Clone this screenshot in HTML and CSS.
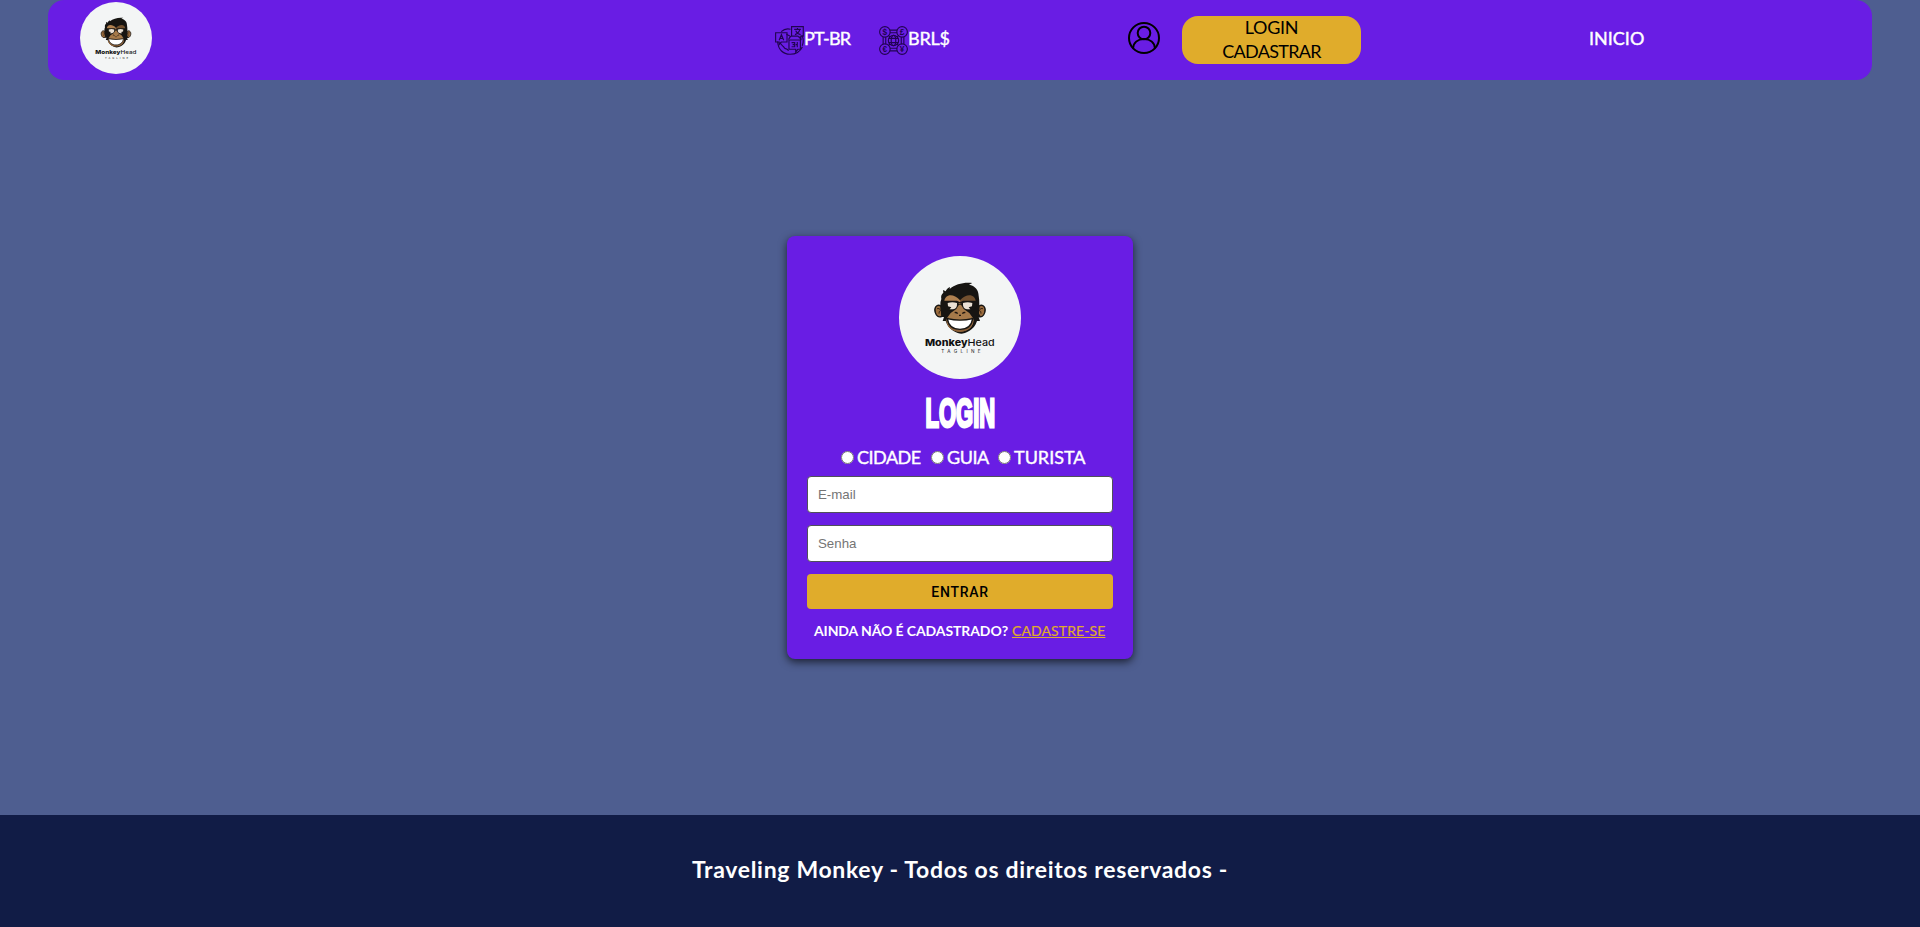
FILE: index.html
```html
<!DOCTYPE html>
<html lang="pt-BR">
<head>
<meta charset="utf-8">
<title>Traveling Monkey - Login</title>
<link rel="stylesheet" href="styles.css">
</head>
<body>
<svg class="defs" aria-hidden="true">
  <symbol id="monkey" viewBox="27 17 366 369" preserveAspectRatio="none">
    <ellipse cx="210" cy="201.500" rx="183" ry="184.500" fill="#f3f5f5"/>
    <path d="M153 167c-13-8-22 7-17 20 3 10 9 15 20 11zM267 167c13-8 22 7 17 20-3 10-9 15-20 11z" fill="#9b6c3e" stroke="#171512" stroke-width="4"/>
    <path d="M141 175q8-4 11 6-6 1-5 9M279 175q-8-4-11 6 6 1 5 9" fill="none" stroke="#3b2715" stroke-width="3"/>
    <path d="M154 188c-3-16-5-30 0-42-2-9 1-15 6-19l-1-8 8 4c2-6 7-10 13-13l-1 6c17-15 43-21 68-18l-10 5c18 3 29 16 29 33 3 17 2 34 0 52l7 12-7 0 4 12-9 0c-8 28-36 38-47 38s-39-10-47-38l-9 0 4-12-7 0z" fill="#171512"/>
    <path d="M163 154c0-21 26-28 47-4v11h-47z" fill="#b08150"/>
    <path d="M257 154c0-21-26-28-47-4v11h47z" fill="#73502f"/>
    <path d="M182 188l17-12 8-13h6l8 13 17 12 13 18c0 25-18 38-41 38s-41-13-41-38z" fill="#a67a4a"/>
    <path d="M210 235c18 0 31-10 40-25-3 23-18 34-40 34s-37-11-40-34c9 15 22 25 40 25z" fill="#8d6038"/>
    <path d="M158 151h43l9 5 9-5h43l-1 9c-3 13-7 20-19 20s-22-8-26-19q-6-5-12 0c-4 11-14 19-26 19s-16-7-19-20z" fill="#171512"/>
    <path d="M173 158q14-4 28 0c1 12-3 18-12 19h-10l5-6-10-3zM247 158q-14-4-28 0c-1 12 3 18 12 19h10l-5-6 10-3z" fill="#ebe1d5"/>
    <path d="M194 187q5-2 9 3M226 187q-5-2-9 3M207 195h6" fill="none" stroke="#21170f" stroke-width="4"/>
    <path d="M172 205q38 9 76 0c-3 21-18 32-38 32s-35-11-38-32z" fill="#fff" stroke="#171512" stroke-width="4"/>
    <path d="M167 207l8-4M253 207l-8-4" stroke="#171512" stroke-width="3"/>
  </symbol>
</svg>

<header class="navbar">
  <a class="nav-logo">
    <svg class="fill" viewBox="27 17 366 369" preserveAspectRatio="none">
      <use href="#monkey" x="27" y="17" width="366" height="369"/>
      <text x="105" y="286" class="brand-name" textLength="209" lengthAdjust="spacingAndGlyphs"><tspan class="brand-strong">Monkey</tspan>Head</text>
      <text x="154" y="308" class="brand-tag" textLength="118">TAGLINE</text>
    </svg>
  </a>
  <div class="locale">
    <svg class="locale-icon" viewBox="0 0 28 28">
      <g fill="none" stroke="currentColor" stroke-width="1.100">
        <path d="M15 3.200Q10 1.800 6 5.500M2.500 15C3 23 8 27.300 14.500 27.300c6 0 10-3 12-7.300M26 9c2 4 1.600 7 .3 10M5 16c1 3 3 3 4 5s3 0 4 3M11 8l4 2-2 3M24 10l1 4"/>
        <path d="M.6 6.500h11v9H6l-2 2.500v-2.500H.600zM16 .6h11.300v9.200H25v2.600l-3-2.600h-6zM13.500 13.500h11v9H22l-2 2.700v-2.700h-6.500z"/>
        <path d="M4 13.700l2.200-5.500 2.200 5.500M4.700 12h3M18.500 3.200h6.500M21.700 2v1.200M19.300 8.300q4-1.500 4.700-5M20 4.500q1 3 4.700 3.800M16 16h3v4h-3M17 18h2M21.500 15.500v5M20 18h1.500"/>
      </g>
    </svg>
    <span class="nav-text t-lang">PT-BR</span>
  </div>
  <div class="locale locale-currency">
    <svg class="locale-icon" viewBox="0 0 28 28">
      <g fill="none" stroke="currentColor" stroke-width="1.100">
        <circle cx="5.700" cy="5.700" r="5.100"/><circle cx="22.300" cy="5.700" r="5.100"/><circle cx="5.700" cy="22.300" r="5.100"/><circle cx="22.300" cy="22.300" r="5.100"/>
        <circle cx="14" cy="14" r="5"/><ellipse cx="14" cy="14" rx="2.200" ry="5"/><path d="M9.500 12h9M9.500 16h9M10.500 4h7M10.500 6.500h7M10.500 21.500h7M10.500 24h7M4 10.500v7M6.500 10.500v7M21.500 10.500v7M24 10.500v7M9 9l1.800 1.800M19 9l-1.800 1.800M9 19l1.800-1.800M19 19l-1.800-1.800"/>
      </g>
      <g class="coins"><text x="5.700" y="8.600">$</text><text x="22.300" y="8.600">£</text><text x="5.700" y="25.200">€</text><text x="22.300" y="25.200">¥</text></g>
    </svg>
    <span class="nav-text t-cur">BRL$</span>
  </div>
  <svg class="user-icon" viewBox="0 0 32 32" fill="none" stroke="#000" stroke-width="2">
    <circle cx="16" cy="16" r="15"/><circle cx="16" cy="11" r="6.300"/><path d="M5 26.500C5.500 20.500 10 17 16 17s10.500 3.500 11 9.500"/>
  </svg>
  <div class="account">
    <a class="t-login">LOGIN</a>
    <a class="t-register">CADASTRAR</a>
  </div>
  <a class="nav-text nav-home">INICIO</a>
</header>

<main class="page">
  <form class="card">
    <svg class="card-logo" viewBox="27 17 366 369" preserveAspectRatio="none">
      <use href="#monkey" x="27" y="17" width="366" height="369"/>
      <text x="105" y="286" class="brand-name" textLength="209" lengthAdjust="spacingAndGlyphs"><tspan class="brand-strong">Monkey</tspan>Head</text>
      <text x="154" y="308" class="brand-tag" textLength="118">TAGLINE</text>
    </svg>
    <h1 class="title"><span class="title-text">LOGIN</span></h1>
    <div class="roles">
      <label class="role"><input type="radio" name="role"><span class="t-city">CIDADE</span></label>
      <label class="role"><input type="radio" name="role"><span class="t-guide">GUIA</span></label>
      <label class="role"><input type="radio" name="role"><span class="t-tourist">TURISTA</span></label>
    </div>
    <input class="field" type="email" placeholder="E-mail">
    <input class="field" type="password" placeholder="Senha">
    <button class="submit" type="button">ENTRAR</button>
    <p class="signup"><span class="t-question">AINDA NÃO É CADASTRADO?</span><a class="signup-link">CADASTRE-SE</a></p>
  </form>
</main>

<footer class="footer"><span class="footer-text">Traveling Monkey - Todos os direitos reservados -</span></footer>
</body>
</html>
```
FILE: styles.css
```css
* { box-sizing: border-box; }
body {
  margin: 0;
  height: 927px;
  display: flex;
  flex-direction: column;
  overflow: hidden;
  background: #4e5e90;
  color: #fff;
  font-family: Lato, "Open Sans", sans-serif;
}
.defs { position: absolute; width: 0; height: 0; }
.brand-name { font: 500 28px Inter, sans-serif; fill: #111; }
.brand-strong { font-weight: 800; }
.brand-tag { font: 14px Inter, sans-serif; fill: #222; }

.navbar {
  flex: none;
  height: 80px;
  margin: 0 48px;
  padding-left: 32px;
  display: flex;
  align-items: flex-start;
  background: #691de4;
  border-radius: 16px;
}
.nav-logo { width: 72px; height: 72px; margin-top: 2px; }
.fill { display: block; width: 100%; height: 100%; }
.locale { display: flex; width: 104px; margin: 26px 0 0 623px; }
.locale-currency { margin-left: 0; }
.locale-icon { flex: none; width: 29px; height: 29px; color: #210451; }
.coins { font: bold 8px "Liberation Sans", sans-serif; text-anchor: middle; fill: #210451; }
.nav-text { font-size: 18px; line-height: 25px; white-space: nowrap; -webkit-text-stroke: 0.4px #fff; }
.t-lang { letter-spacing: -0.7px; }
.t-cur { letter-spacing: -0.2px; }
.user-icon { flex: none; width: 32px; height: 32px; margin: 22px 0 0 145px; }
.account {
  flex: none;
  width: 179px;
  height: 48px;
  margin: 16px 0 0 22px;
  display: flex;
  flex-direction: column;
  align-items: center;
  border-radius: 16px;
  background: #e0ac2b;
  color: #000;
  font-size: 18px;
  line-height: 24px;
}
.account a { margin-top: -1px; margin-bottom: 1px; }
.t-login { letter-spacing: -0.3px; }
.t-register { letter-spacing: -0.7px; }
.nav-home { margin: 26px 0 0 228px; }

.page { flex: 1; display: flex; justify-content: center; align-items: flex-start; padding-top: 156px; }
.card {
  width: 346px;
  height: 423px;
  padding: 20px 20px 0;
  display: flex;
  flex-direction: column;
  align-items: center;
  background: #691de4;
  border-radius: 8px;
  box-shadow: 0 3px 8px rgba(0, 0, 0, 0.65);
}
.card > * { flex: none; }
.card-logo { width: 122px; height: 123px; }
.title {
  width: 70px;
  height: 52px;
  margin: 8px 0 10px;
  display: flex;
  justify-content: center;
  font: bold 40px/53px "Liberation Sans", sans-serif;
}
.title-text { flex: none; transform: scaleX(0.55); -webkit-text-stroke: 3px #fff; }
.roles { width: 100%; height: 27px; padding-left: 34px; display: flex; font-size: 18px; line-height: 17px; }
.role { display: flex; align-items: flex-start; width: 90px; }
.role:nth-child(2) { width: 67px; }
.role input { flex: none; width: 13px; height: 13px; margin: 2px 3px 0 0; }
.role span { -webkit-text-stroke: 0.4px #fff; white-space: nowrap; }
.t-city { letter-spacing: -0.5px; }
.t-guide { letter-spacing: -0.5px; }
.t-tourist { letter-spacing: 0; }
.field {
  width: 306px;
  height: 37px;
  margin: 0 0 12px;
  padding: 0 10px;
  border: 1px solid #50505a;
  border-radius: 4px;
  background: #fff;
  font: 13.300px "Liberation Sans", sans-serif;
}
.field::placeholder { color: #757575; }
.submit {
  width: 306px;
  height: 35px;
  padding: 0;
  border: 0;
  border-radius: 4px;
  background: #e0ac2b;
  color: #000;
  font: 500 14px Roboto, sans-serif;
  letter-spacing: 0.7px;
}
.signup { width: 100%; margin: 12px 0 0; padding-left: 7px; display: flex; font-size: 14px; line-height: 20px; white-space: nowrap; }
.t-question { width: 198px; font-weight: 700; letter-spacing: -0.1px; }
.signup-link { color: #e0ac2b; text-decoration: underline; letter-spacing: 0.1px; -webkit-text-stroke: 0.2px #e0ac2b; }

.footer {
  flex: none;
  height: 112px;
  display: flex;
  justify-content: center;
  background: #111c46;
}
.footer-text { margin-top: 37px; font-size: 23px; font-weight: 700; line-height: 34px; letter-spacing: 0.68px; white-space: nowrap; }
```
